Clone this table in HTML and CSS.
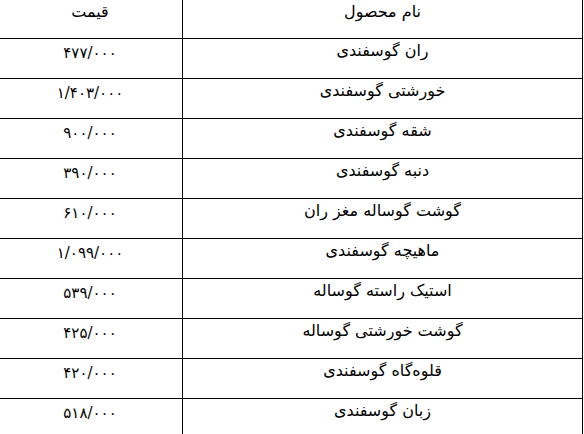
FILE: index.html
```html
<!DOCTYPE html>
<html lang="fa" dir="rtl">
<head>
<meta charset="utf-8">
<title>قیمت گوشت</title>
<link rel="stylesheet" href="styles.css">
</head>
<body>
<table class="price-table">
  <colgroup>
    <col class="col-name">
    <col class="col-price">
  </colgroup>
  <tr class="head">
    <td class="name">نام محصول</td>
    <td class="label">قیمت</td>
  </tr>
  <tr><td class="name">ران گوسفندی</td><td class="price">۴۷۷/۰۰۰</td></tr>
  <tr><td class="name">خورشتی گوسفندی</td><td class="price">۱/۴۰۳/۰۰۰</td></tr>
  <tr><td class="name">شقه گوسفندی</td><td class="price">۹۰۰/۰۰۰</td></tr>
  <tr><td class="name">دنبه گوسفندی</td><td class="price">۳۹۰/۰۰۰</td></tr>
  <tr><td class="name">گوشت گوساله مغز ران</td><td class="price">۶۱۰/۰۰۰</td></tr>
  <tr><td class="name">ماهیچه گوسفندی</td><td class="price">۱/۰۹۹/۰۰۰</td></tr>
  <tr><td class="name">استیک راسته گوساله</td><td class="price">۵۳۹/۰۰۰</td></tr>
  <tr><td class="name">گوشت خورشتی گوساله</td><td class="price">۴۲۵/۰۰۰</td></tr>
  <tr><td class="name">قلوه‌گاه گوسفندی</td><td class="price">۴۲۰/۰۰۰</td></tr>
  <tr><td class="name">زبان گوسفندی</td><td class="price">۵۱۸/۰۰۰</td></tr>
</table>
</body>
</html>
```
FILE: styles.css
```css
html, body {
  margin: 0;
  padding: 0;
  background: #fff;
}
body {
  width: 584px;
  font-family: "DejaVu Sans", sans-serif;
  color: #000;
  overflow: hidden;
}
.price-table {
  border-collapse: separate;
  border-spacing: 0;
  table-layout: fixed;
  width: 585px;
  margin: 0 1px 0 0;
}
.col-name { width: 401px; }
.col-price { width: 184px; }
.price-table td {
  border-bottom: 1px solid #000;
  padding: 2px 4px 17px;
  vertical-align: top;
  text-align: center;
  font-size: 16px;
  line-height: 20px;
}
.price-table td.name {
  border-left: 1px solid #000;
  border-right: 1px solid #000;
}
.price-table .head td {
  padding: 2px 4px 16px;
}
.price-table td.price {
  padding: 4px 4px 15px;
  font-size: 15px;
}
```
